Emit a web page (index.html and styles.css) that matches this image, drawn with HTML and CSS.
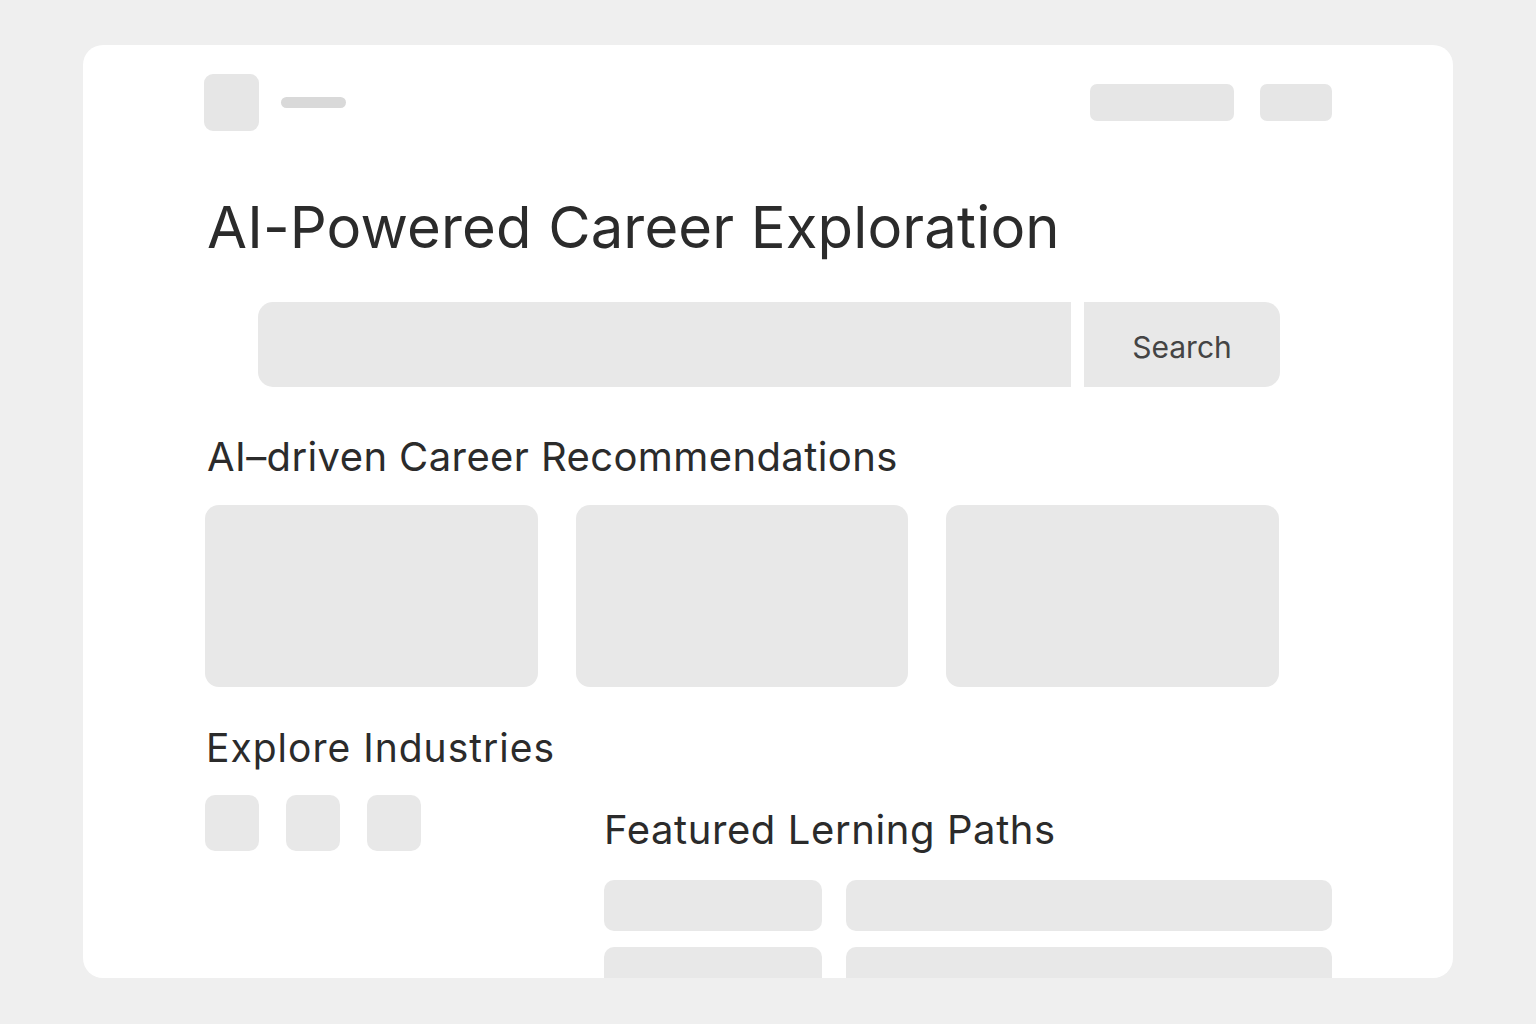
FILE: index.html
```html
<!DOCTYPE html>
<html lang="en">
<head>
  <meta charset="UTF-8">
  <meta name="viewport" content="width=device-width, initial-scale=1.0">
  <title>AI-Powered Career Exploration</title>
  <link rel="stylesheet" href="styles.css">
</head>
<body>
  <div class="page">

    <!-- topo: logo + botoes -->
    <div class="header">
      <div class="brand">
        <div class="logo"></div>
        <div class="brand-line"></div>
      </div>
      <div class="nav">
        <div class="nav-btn wide"></div>
        <div class="nav-btn"></div>
      </div>
    </div>

    <h1>AI-Powered Career Exploration</h1>

    <div class="search">
      <input type="text" class="search-input">
      <button class="search-btn">Search</button>
    </div>

    <h2 class="recs-title">AI–driven Career Recommendations</h2>
    <div class="cards">
      <div class="card"></div>
      <div class="card"></div>
      <div class="card"></div>
    </div>

    <h2 class="industries-title">Explore Industries</h2>
    <div class="bottom">
      <div class="industries">
        <div class="tile"></div>
        <div class="tile"></div>
        <div class="tile"></div>
      </div>

      <div class="paths">
        <h2 class="paths-title">Featured Lerning Paths</h2>
        <div class="path-list">
          <div class="path-tag"></div>
          <div class="path-bar"></div>
          <div class="path-tag"></div>
          <div class="path-bar"></div>
        </div>
      </div>
    </div>

  </div>
</body>
</html>
```

FILE: styles.css
```css
body {
  margin: 0;
  padding: 45px 83px 46px;
  background: #efefef;
  font-family: Inter, "Liberation Sans", Arial, sans-serif;
  color: #2b2b2b;
}
.page {
  background: #fff;
  border-radius: 20px;
  height: 933px;
  overflow: hidden;
  padding: 29px 121px 0;
  box-sizing: border-box;
}
.header {
  display: flex;
  justify-content: space-between;
  align-items: center;
}
.brand {
  display: flex;
  align-items: center;
  gap: 22px;
}
.logo {
  width: 55px;
  height: 57px;
  border-radius: 9px;
  background: #e6e6e6;
}
.brand-line {
  width: 65px;
  height: 11px;
  border-radius: 6px;
  background: #d9d9d9;
}
.nav {
  display: flex;
  gap: 26px;
}
.nav-btn {
  width: 72px;
  height: 37px;
  border-radius: 7px;
  background: #e6e6e6;
}
.nav-btn.wide {
  width: 144px;
}
h1 {
  font-size: 58px;
  line-height: 70px;
  font-weight: 400;
  margin: 61px 0 0 3px;
  letter-spacing: 0.15px;
}
.search {
  display: flex;
  gap: 13px;
  margin: 40px 52px 0 54px;
  height: 85px;
}
.search-input {
  flex: 1;
  border: none;
  margin: 0;
  background: #e8e8e8;
  border-radius: 15px 0 0 15px;
}
.search-btn {
  width: 196px;
  border: none;
  background: #e8e8e8;
  border-radius: 0 15px 15px 0;
  font-family: Inter, "Liberation Sans", Arial, sans-serif;
  font-size: 30px;
  color: #444;
  padding: 4px 0 0;
}
h2 {
  font-weight: 400;
  margin: 0;
}
.recs-title {
  font-size: 40px;
  line-height: 48px;
  letter-spacing: 0.4px;
  margin: 46px 0 0 3px;
}
.cards {
  display: grid;
  grid-template-columns: repeat(3, 1fr);
  gap: 38px;
  margin: 24px 53px 0 1px;
}
.card {
  height: 182px;
  border-radius: 14px;
  background: #e8e8e8;
}
.industries-title {
  font-size: 39px;
  line-height: 45px;
  letter-spacing: 1px;
  margin: 38px 0 0 2px;
}
.bottom {
  display: flex;
  margin-top: 25px;
}
.industries {
  display: flex;
  gap: 27px;
  width: 399px;
  padding-left: 1px;
}
.tile {
  width: 54px;
  height: 56px;
  border-radius: 10px;
  background: #e8e8e8;
}
.paths {
  flex: 1;
}
.paths-title {
  font-size: 40px;
  line-height: 46px;
  letter-spacing: 0.6px;
  margin-top: 12px;
}
.path-list {
  display: grid;
  grid-template-columns: 218px 1fr;
  gap: 16px 24px;
  margin-top: 27px;
}
.path-tag, .path-bar {
  height: 51px;
  border-radius: 10px;
  background: #e8e8e8;
}
```
